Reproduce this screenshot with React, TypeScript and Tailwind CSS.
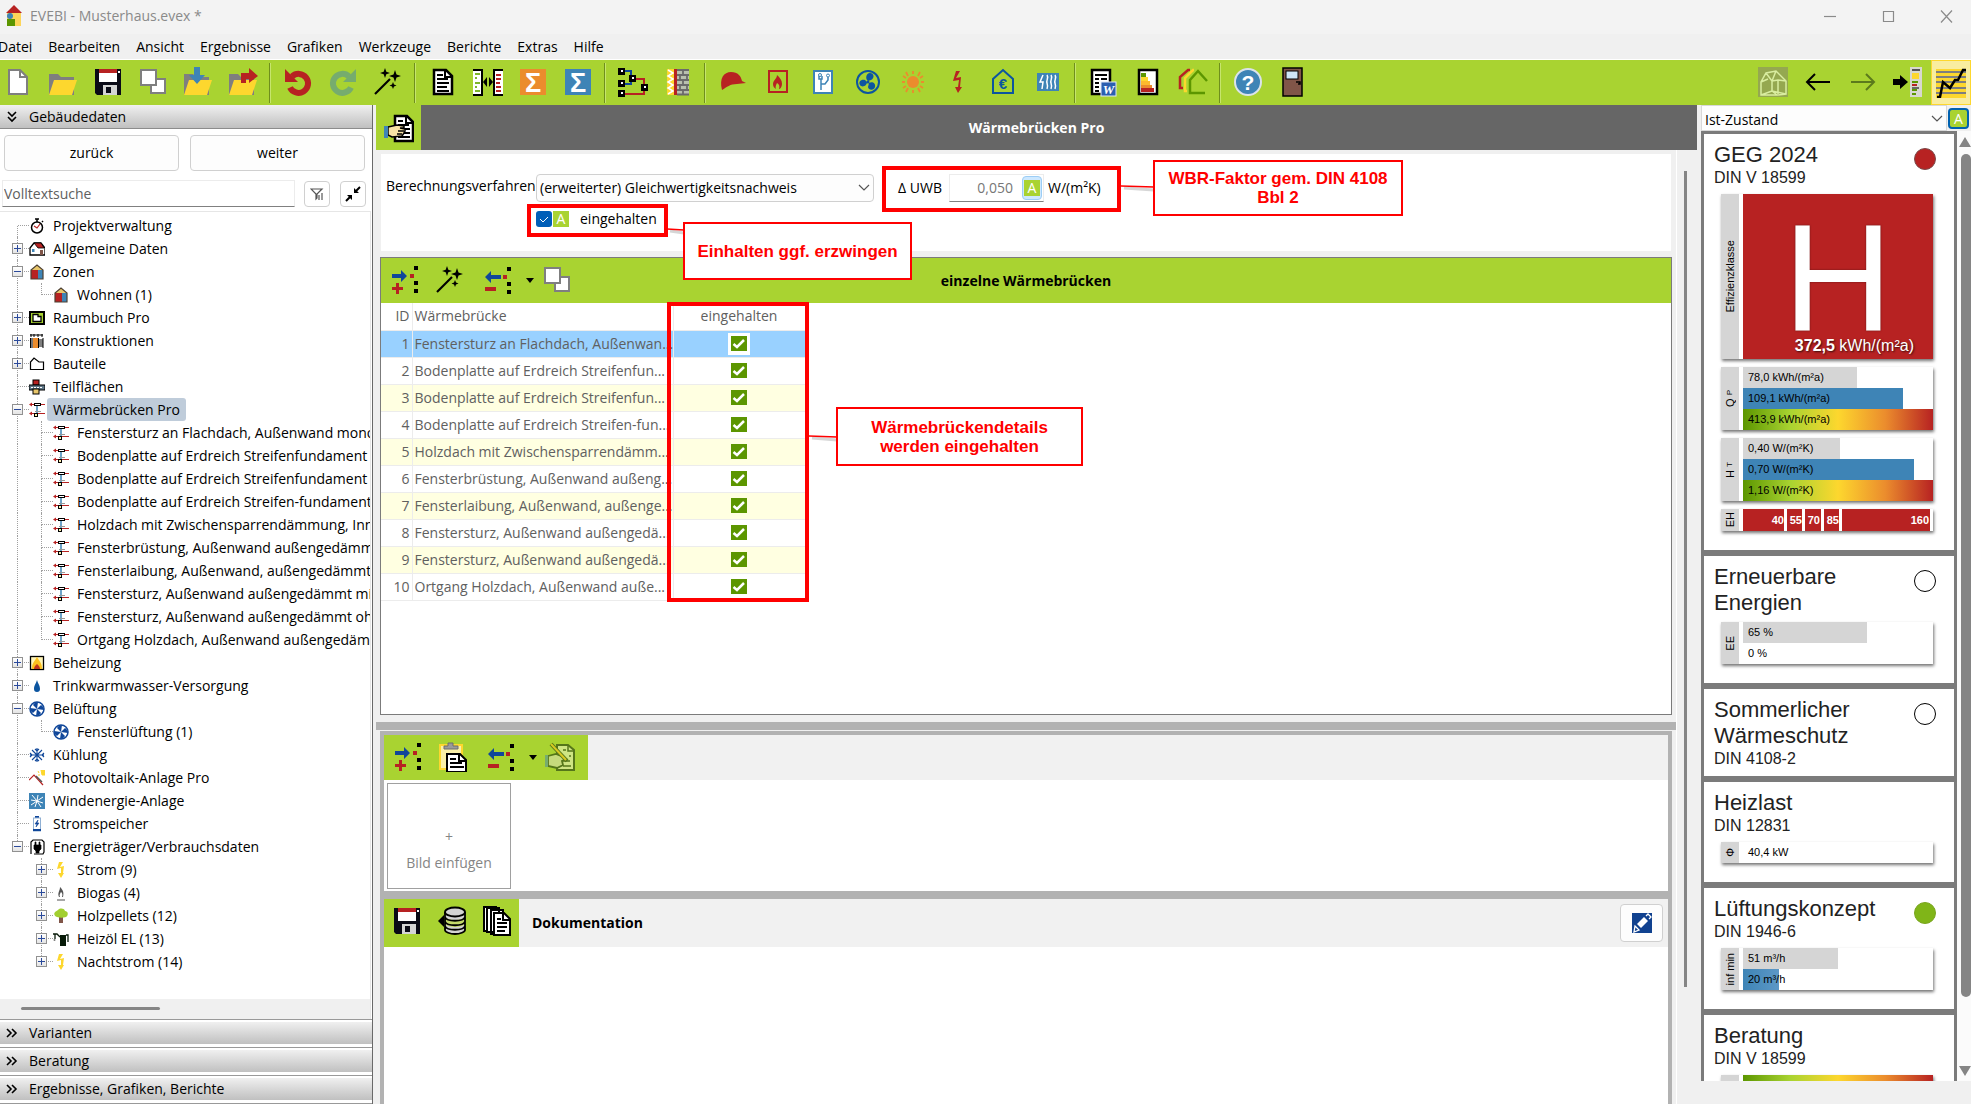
import React from "react";

type Kids = { children?: React.ReactNode };

const Ico = ({ s = 30, children }: Kids & { s?: number }) => (
  <svg width={s} height={s} viewBox={`0 0 ${s} ${s}`} fill="none" aria-hidden="true" className="block shrink-0">
    {children}
  </svg>
);

/* ---------- toolbar icons, 30 x 30 ---------- */

const Floppy = () => (
  <Ico>
    <path d="M2 2h26v26H4l-2-2z" fill="#0a0a16" />
    <rect x="6" y="2" width="18" height="4" fill="#b72222" />
    <rect x="6" y="6" width="18" height="9" fill="#fff" />
    <rect x="25" y="4" width="2" height="2" fill="#fff" />
    <rect x="10" y="18" width="14" height="10" fill="#d4d4d4" />
    <rect x="13" y="20" width="5" height="6" fill="#0a0a16" />
  </Ico>
);
const NewDoc = () => (
  <Ico>
    <path d="M6 3h11l7 7v17H6z" fill="#fff" stroke="#7f7f7f" strokeWidth="2" />
    <path d="M17 3v7h7" stroke="#7f7f7f" strokeWidth="2" />
  </Ico>
);
const FolderShape = () => (
  <>
    <path d="M1 7h9l3 3h13v18H1z" fill="#7f7f7f" />
    <path d="M6 13h23l-5 15H1z" fill="#fdd72e" />
  </>
);
const Folder = () => (
  <Ico>
    <FolderShape />
  </Ico>
);
const ImportI = () => (
  <Ico>
    <FolderShape />
    <path d="M11 0h6v8h5l-8 9-8-9h5z" fill="#3e84b6" />
  </Ico>
);
const ExportI = () => (
  <Ico>
    <FolderShape />
    <path d="M13 16V6h8V1l9 8-9 7v-4h-3v4z" fill="#b72222" />
  </Ico>
);
const Dup = () => (
  <Ico>
    <rect x="13" y="12" width="14" height="14" fill="#fff" stroke="#7f7f7f" strokeWidth="2" />
    <rect x="3" y="3" width="15" height="15" fill="#fff" stroke="#7f7f7f" strokeWidth="2" />
  </Ico>
);
const Undo = () => (
  <Ico>
    <path d="M9 9.500a9.500 9.500 0 1 1-2 11" stroke="#b72222" strokeWidth="6" />
    <path d="M2 2l0 13h13z" fill="#b72222" />
  </Ico>
);
const Redo = () => (
  <Ico>
    <path d="M21 9.500a9.500 9.500 0 1 0 2 11" stroke="#76ac6e" strokeWidth="6" />
    <path d="M28 2v13H15z" fill="#76ac6e" />
  </Ico>
);
const Wand = () => (
  <Ico>
    <path d="M2 27L17 12" stroke="#000" strokeWidth="2.200" />
    <path d="M12 1l1.300 3.700L17 6l-3.700 1.300L12 11l-1.300-3.700L7 6l3.700-1.300z" fill="#000" />
    <path d="M22 3l1.500 4.500L28 9l-4.500 1.500L22 15l-1.500-4.500L16 9l4.500-1.500z" fill="#000" />
    <path d="M20 15l1 2.500 2.500 1-2.500 1-1 2.500-1-2.500-2.500-1 2.500-1z" fill="#000" />
  </Ico>
);
const Doc = () => (
  <Ico>
    <path d="M6 3h12l6 6v18H6z" fill="#fff" stroke="#000" strokeWidth="2.500" />
    <path d="M17 3v7h7" stroke="#000" strokeWidth="2" />
    <path d="M9 8h6M9 12h11M9 16h12M9 20h10M9 24h12" stroke="#000" strokeWidth="2" />
  </Ico>
);
const Compare = () => (
  <Ico>
    <path d="M0 3h9v25H0z" fill="#fff" />
    <path d="M0 3h9v25H0" stroke="#000" strokeWidth="2" />
    <path d="M2 7h5M2 11h2M2 16h5M2 20h2M2 24h5" stroke="#7db52b" strokeWidth="2" />
    <path d="M21 3h9v25h-9z" fill="#fff" />
    <path d="M30 3h-9v25h9" stroke="#000" strokeWidth="2" />
    <path d="M23 8h5M23 12h5M23 16h4M23 20h5M23 24h5" stroke="#b72222" strokeWidth="2" />
    <path d="M14 10v10l-4-5zM16 10v10l4-5z" fill="#000" />
  </Ico>
);
const Sigma = ({ c }: { c: string }) => (
  <Ico>
    <rect x="2" y="2" width="26" height="26" fill={c} />
    <text x="15" y="24.500" fontSize="27" fontWeight="700" fill="#fff" textAnchor="middle" fontFamily="Liberation Sans, sans-serif">
      Σ
    </text>
  </Ico>
);
const Net = () => (
  <Ico>
    <path d="M4 4h9v6M4 17h9v-5" stroke="#10479a" strokeWidth="2" />
    <path d="M16 12h10v8M6 27h20v-6" stroke="#b72222" strokeWidth="2" />
    {[[0, 1], [0, 13], [0, 23], [11, 8], [23, 17]].map(([x, y]) => (
      <g key={`${x}-${y}`}>
        <rect x={x} y={y} width="7" height="7" fill="#000" />
        <rect x={x + 3} y={y + 2} width="2" height="2" fill="#fff" />
      </g>
    ))}
  </Ico>
);
const Wall = () => (
  <Ico>
    <rect x="4" y="2" width="8" height="26" fill="#fdd72e" />
    <path d="M5 3l5 3-5 3 5 3-5 3 5 3-5 3 5 3-5 3" stroke="#fff" strokeWidth="1.500" />
    <rect x="11" y="2" width="3" height="26" fill="#b72222" />
    <rect x="14" y="2" width="12" height="26" fill="#b9bfae" />
    <path d="M14 3h12M14 8h12M14 13h12M14 18h12M14 23h12M14 27.500h12" stroke="#6b6b6b" strokeWidth="1.800" />
    <path d="M20 3v5M17 8v5M24 8v5M20 13v5M17 18v5M24 18v5M20 23v5" stroke="#6b6b6b" strokeWidth="1.800" />
  </Ico>
);
const Cap = () => (
  <Ico>
    <path d="M4 23C1 11 6 5 13 5c7 0 10 4 11 9l4 2-9 1c-7 0-10 3-15 6z" fill="#b72222" />
  </Ico>
);
const FlameBox = () => (
  <Ico>
    <rect x="6" y="4" width="18" height="21" stroke="#b72222" strokeWidth="2" />
    <path d="M14 8c3 3 5 5 5 9 0 3-2 5-3 5 1-3 0-5-2-6-1 2-2 4-1 6-2-1-3-3-3-5 0-4 4-5 4-9z" fill="#b72222" />
  </Ico>
);
const PipeBox = () => (
  <Ico>
    <rect x="6" y="4" width="18" height="22" fill="#fff" stroke="#3e84b6" strokeWidth="2" />
    <path d="M13 23V12M13 17h4l3-4v-3M11 9v3h3V9" stroke="#3e84b6" strokeWidth="1.500" />
    <circle cx="20" cy="8.500" r="1.500" stroke="#3e84b6" />
    <circle cx="12" cy="8" r="1.500" stroke="#3e84b6" />
  </Ico>
);
const FanRing = () => (
  <Ico>
    <circle cx="15" cy="15" r="11" stroke="#0c55a0" strokeWidth="2" />
    <path d="M15 14c-3-2-2-8 2-8s5 5 1 7zM14 15c0 4-5 6-7 3s1-6 5-5zM16 16c3-2 7 0 6 4s-7 3-7 0z" fill="#0c55a0" />
    <circle cx="15" cy="15" r="1.500" fill="#0c55a0" />
  </Ico>
);
const Sun = () => (
  <Ico>
    <circle cx="15" cy="15" r="6" fill="#eb8c2d" />
    <path d="M15 4v3M15 23v3M4 15h3M23 15h3M8 5l2 4M22 5l-2 4M8 25l2-4M22 25l-2-4M5 9l3 2M25 9l-3 2M5 21l3-2M25 21l-3-2" stroke="#eb8c2d" strokeWidth="1.800" />
  </Ico>
);
const BoltRed = () => (
  <Ico>
    <path d="M17 4h-4l-3 10 6-1-1 7h-3l3 6 4-6h-2l1-10-5 1z" fill="#b72222" />
  </Ico>
);
const HouseEuro = () => (
  <Ico>
    <path d="M5 26V12l10-9 10 9v14z" stroke="#0c55a0" strokeWidth="2" />
    <text x="15" y="22" fontSize="15" fontWeight="700" fill="#0c55a0" textAnchor="middle" fontFamily="Liberation Sans, sans-serif">
      €
    </text>
  </Ico>
);
const Heater = () => (
  <Ico>
    <rect x="4" y="6" width="22" height="18" fill="#3e84b6" />
    <path d="M10 8l-3 7h3l-1 7" stroke="#fff" strokeWidth="1.500" />
    <path d="M14 8c2 3-1 5 0 8s1 4 0 6M18 8c2 3-1 5 0 8s1 4 0 6M22 8c2 3-1 5 0 8s1 4 0 6" stroke="#fff" strokeWidth="1.500" />
  </Ico>
);
const WordDoc = () => (
  <Ico>
    <rect x="4" y="3" width="18" height="24" fill="#fff" stroke="#000" strokeWidth="2.500" />
    <path d="M7 8h12M7 12h4M13 12h6M7 16h4M7 20h4M7 24h4" stroke="#000" strokeWidth="2.200" />
    <rect x="13" y="15" width="15" height="14" fill="#2b5fb0" stroke="#dfe8f5" />
    <text x="20.500" y="27" fontSize="13" fontWeight="700" fontStyle="italic" fill="#fff" textAnchor="middle" fontFamily="Liberation Serif, serif">
      W
    </text>
  </Ico>
);
const LabelI = () => (
  <Ico>
    <rect x="6" y="3" width="18" height="24" fill="#fff" stroke="#000" strokeWidth="2.500" />
    <rect x="8" y="6" width="5" height="4" fill="#5c9600" />
    <rect x="8" y="10" width="7" height="4" fill="#fdd72e" />
    <rect x="8" y="14" width="9" height="4" fill="#fdb92e" />
    <rect x="8" y="18" width="11" height="4" fill="#eb8c2d" />
    <rect x="8" y="21" width="13" height="4" fill="#b72222" />
  </Ico>
);
const Houses = () => (
  <Ico>
    <path d="M5 21H2V10l8-7h2" stroke="#b72222" strokeWidth="2.500" />
    <path d="M9 24H7V11l8-8h1" stroke="#fdd72e" strokeWidth="2.500" />
    <path d="M27 26H12V13l8-9 9 10" stroke="#5c9600" strokeWidth="2.500" />
  </Ico>
);
const Help = () => (
  <Ico>
    <circle cx="15" cy="15" r="13" fill="#3e84b6" stroke="#dbe3ea" strokeWidth="2" />
    <text x="15" y="22.500" fontSize="21" fontWeight="700" fill="#fff" textAnchor="middle" fontFamily="Liberation Sans, sans-serif">
      ?
    </text>
  </Ico>
);
const Door = () => (
  <Ico>
    <rect x="5" y="1" width="19" height="28" fill="#805548" stroke="#000" strokeWidth="1.500" />
    <rect x="8" y="4" width="12" height="8" fill="#cfe6f7" stroke="#000" />
    <path d="M18 15h4v2h-2" stroke="#000" strokeWidth="1.500" />
  </Ico>
);
const House3d = () => (
  <Ico>
    <rect width="30" height="30" fill="#95a850" />
    <path d="M3 28V15l5-9 10-2 10 10v13l-9 1zM8 6l6 8v10l5 4M3 15l7-3M14 14L18 4M14 14l6-1 8 1M20 13v14M14 24l-11 4M14 24l14 3" stroke="#d9eda0" strokeWidth="1.500" />
  </Ico>
);
const ArrowL = () => (
  <Ico>
    <path d="M27 15H4M12 7l-8 8 8 8" stroke="#000" strokeWidth="2" />
  </Ico>
);
const ArrowR = () => (
  <Ico>
    <path d="M3 15h23M18 7l8 8-8 8" stroke="#5b7a1c" strokeWidth="2" />
  </Ico>
);
const PanelI = () => (
  <Ico>
    <path d="M0 12h7V8l8 7-8 7v-4H0z" fill="#000" />
    <rect x="17" y="0" width="12" height="30" fill="#d8d8d0" />
    <rect x="19" y="2" width="8" height="2" fill="#555" />
    <rect x="19" y="6" width="7" height="6" fill="#fdd72e" />
    <path d="M19 15h6M19 23h5M19 27h4" stroke="#5c9600" strokeWidth="2" />
    <path d="M19 18h5" stroke="#b72222" strokeWidth="2" />
    <path d="M19 21h7" stroke="#444" strokeWidth="1.500" />
  </Ico>
);
const ChartI = () => (
  <Ico>
    <rect y="1" width="30" height="29" fill="#fdd72e" />
    <path d="M0 4h30M0 9h30M0 14h30M0 20h30M0 25h30" stroke="#7f7f7f" strokeWidth="2" />
    <path d="M1 29h3l3-15 7 6 5-8h3l5-10h3" stroke="#000" strokeWidth="2.500" />
  </Ico>
);
const RowAdd = () => (
  <Ico>
    <path d="M2 9h9V5l6 6-6 6v-4H2z" fill="#10479a" />
    <path d="M2 22h4v-4h3v4h4v3H9v4H6v-4H2z" fill="#b72222" />
    <rect x="20" y="9" width="4" height="4" fill="#b72222" />
    <path d="M24 1h4v4h-4zM24 16h4v4h-4zM24 24h4v4h-4z" fill="#000" />
  </Ico>
);
const RowDel = () => (
  <Ico>
    <path d="M18 9H8V5l-6 6 6 6v-4h10z" fill="#10479a" />
    <rect x="2" y="21" width="11" height="4" fill="#b72222" />
    <rect x="20" y="9" width="4" height="4" fill="#b72222" />
    <path d="M24 1h4v4h-4zM24 16h4v4h-4zM24 24h4v4h-4z" fill="#000" />
  </Ico>
);
const Clip = () => (
  <Ico>
    <rect x="2" y="3" width="22" height="24" fill="#faf0a8" stroke="#fdd72e" strokeWidth="2" />
    <path d="M6 7V4h4V1h5v3h5v3z" fill="#9a9a9a" stroke="#6d6d6d" />
    <path d="M9 12h13l6 6v12H9z" fill="#fff" stroke="#000" strokeWidth="2" />
    <path d="M21 12v7h7M12 17h6M12 21h12M12 25h14" stroke="#000" strokeWidth="2" />
  </Ico>
);
const HandDoc = () => (
  <Ico>
    <path d="M11 3h12l6 6v19H11z" fill="#fff" stroke="#000" strokeWidth="2.500" />
    <path d="M22 3v7h7M14 8h5M14 12h11M17 16h9M18 20h8M14 24h12" stroke="#000" strokeWidth="2" />
    <path d="M4 14l9-2 7 1v2h-4l5 1v2l-1 2-2 3-10 1-4-2z" fill="#f7e3a6" stroke="#000" strokeWidth="1.500" />
    <path d="M0 13h4v12H0z" fill="#3e84b6" />
    <path d="M14 18h6M13 21h5" stroke="#000" strokeWidth="1.500" />
  </Ico>
);
const EditDoc = () => (
  <Ico>
    <path d="M12 3h11l6 5v20H12z" fill="#cfe583" stroke="#55761a" strokeWidth="2" />
    <path d="M23 3v6h6M24 14h2M17 19h8M18 24h8M18 8h3" stroke="#55761a" strokeWidth="1.500" />
    <path d="M3 14l8-2 5 2 5 3-4 2 1 4-6 3-9-2z" fill="#c6da7c" stroke="#55761a" strokeWidth="1.800" />
    <path d="M0 13h3v12H0z" fill="#76ac6e" />
    <path d="M6 2l16 17" stroke="#55761a" strokeWidth="4" />
    <path d="M6 2l15 16" stroke="#d8c822" strokeWidth="2" />
  </Ico>
);
const Database = () => (
  <Ico>
    <path d="M1 15l6-6v12z" fill="#000" />
    <path d="M8 6v18c0 2 5 4 10 4s10-2 10-4V6z" fill="#d4d4d4" />
    <path d="M8 11c3 4 17 4 20 0v7c-3 4-17 4-20 0z" fill="#c3d96a" />
    <ellipse cx="18" cy="6" rx="10" ry="4.500" fill="#d4d4d4" stroke="#000" strokeWidth="1.800" />
    <path d="M8 6v18c0 2 5 4 10 4s10-2 10-4V6M8 11c2 5 18 5 20 0M8 15.500c2 5 18 5 20 0M8 20c2 5 18 5 20 0" stroke="#000" strokeWidth="1.800" />
  </Ico>
);
const DocStack = () => (
  <Ico>
    <path d="M2 1h12v24H2z" fill="#fff" stroke="#000" strokeWidth="2" />
    <path d="M5 2h12v24H5zM9 4h12v24H9z" fill="#fff" stroke="#000" strokeWidth="2" />
    <path d="M12 7h10l6 6v16H12z" fill="#fff" stroke="#000" strokeWidth="2" />
    <path d="M21 7v7h7M15 13h4M15 17h10M15 21h10M15 25h8" stroke="#000" strokeWidth="2" />
  </Ico>
);

/* ---------- tree icons, 16 x 16 ---------- */

const Stopwatch = () => (
  <Ico s={16}>
    <circle cx="8" cy="9.500" r="5.500" fill="#fff" stroke="#000" strokeWidth="1.500" />
    <path d="M6 1h4M8 1v3M13 3l1 1" stroke="#000" strokeWidth="1.500" />
    <path d="M5 8l3 2 3-4" stroke="#b72222" strokeWidth="1.200" />
  </Ico>
);
const HouseSm = () => (
  <Ico s={16}>
    <path d="M1 14V7l4-5h7l4 5v7z" fill="#fff" stroke="#000" strokeWidth="1.300" />
    <path d="M5 2h7l3 5H9z" fill="#b72222" stroke="#000" strokeWidth=".8" />
    <rect x="3" y="8" width="2.500" height="3" fill="#3e84b6" />
    <rect x="11" y="9" width="3" height="5" fill="#805548" />
  </Ico>
);
const ZoneI = () => (
  <Ico s={16}>
    <path d="M2 6l6-5 6 5z" fill="#e8c66a" />
    <rect x="2" y="6" width="7" height="9" fill="#b72222" />
    <rect x="9" y="6" width="5" height="9" fill="#3e84b6" />
    <path d="M2 15V6l6-5 6 5v9z" stroke="#4d4033" strokeWidth="1.200" />
  </Ico>
);
const RoomI = () => (
  <Ico s={16}>
    <rect x="1" y="2" width="14" height="12" fill="#a9d331" stroke="#000" strokeWidth="2" />
    <path d="M4 4.500h5v2h3v5H4z" fill="#fff" stroke="#000" strokeWidth="1.300" />
  </Ico>
);
const LayersI = () => (
  <Ico s={16}>
    <path d="M1 2h13M2 1v3M5 1v3M9 1v3M13 1v3" stroke="#000" />
    <rect x="2" y="5" width="2" height="10" fill="#777" />
    <rect x="4" y="5" width="5" height="10" fill="#eb8c2d" />
    <rect x="9" y="5" width="5" height="10" fill="#fff" />
    <path d="M1.500 5v10M9.500 5v10M14 5v10M10 7h4M10 9h4M10 11h4M10 13h4" stroke="#000" />
  </Ico>
);
const PartI = () => (
  <Ico s={16}>
    <path d="M1.500 13.500V6L5 2l5 4h4.500v7.500z" fill="#fff" stroke="#000" strokeWidth="1.200" />
  </Ico>
);
const CrossI = () => (
  <Ico s={16}>
    <rect x="4" y="1" width="6" height="5" fill="#b72222" stroke="#000" />
    <rect x="0" y="6" width="16" height="5" fill="#5e7686" stroke="#000" />
    <rect x="4" y="10" width="6" height="5" fill="#e8c66a" stroke="#000" />
    <path d="M2 8.500h12" stroke="#fff" strokeDasharray="2 1" />
  </Ico>
);
const BridgeI = () => (
  <Ico s={16}>
    <path d="M8 4v8" stroke="#3e84b6" strokeWidth="1.500" />
    <path d="M1 2.500h15M1 11.500h15" stroke="#b72222" />
    <path d="M0 2.500l3-2v4zM0 11.500l3-2v4z" fill="#b72222" />
    <rect x="5.500" y="1.500" width="6" height="2" fill="#fff" stroke="#000" />
    <rect x="5.500" y="11.500" width="3" height="3" fill="#fdf0b0" stroke="#000" />
    <path d="M6 9.500h6" stroke="#999" />
  </Ico>
);
const HeatI = () => (
  <Ico s={16}>
    <rect x="1.500" y="1.500" width="13" height="13" fill="#fff5b8" stroke="#000" strokeWidth="1.300" />
    <path d="M8 2c3 5 5 6 5 12H3C3 8 5 7 8 2z" fill="#fdc01e" />
    <path d="M8 9c2 2 3 3 3 5H5c0-2 1-3 3-5z" fill="#c0351d" />
  </Ico>
);
const DropI = () => (
  <Ico s={16}>
    <path d="M8 2c1 4 3 5 3 9a3 3 0 0 1-6 0c0-4 2-5 3-9z" fill="#0c55a0" />
  </Ico>
);
const FanI = () => (
  <Ico s={16}>
    <circle cx="8" cy="8" r="7" fill="#fff" stroke="#10479a" strokeWidth="1.500" />
    <path d="M8 8L4 4c1-2 3-3 5-3zM8 8l4-4c2 1 3 3 3 5zM8 8l4 4c-1 2-3 3-5 3zM8 8l-4 4c-2-1-3-3-3-5z" fill="#10479a" />
  </Ico>
);
const SnowI = () => (
  <Ico s={16}>
    <path d="M8 1v14M1 8h14M3 3l10 10M13 3L3 13M6 2l2 2 2-2M6 14l2-2 2 2M1 6l2 2-2 2M15 6l-2 2 2 2" stroke="#10479a" strokeWidth="1.100" />
  </Ico>
);
const PvI = () => (
  <Ico s={16}>
    <path d="M0 10l5-5 9 10" stroke="#b72222" strokeWidth="1.200" />
    <path d="M7 6l6 6" stroke="#555" strokeWidth="1.500" />
    <path d="M12 0h4v5h-3zM9 1l1 2M9 5l2 0" fill="#fdd72e" stroke="#fdd72e" />
  </Ico>
);
const WindI = () => (
  <Ico s={16}>
    <rect x="0" y="0" width="16" height="16" fill="#3e84b6" />
    <path d="M8 8L3 2M8 8l6-4M8 8l4 6M8 8l-6 4M8 8l1-6M8 8l6 2M8 8l-2 6M8 8L2 7" stroke="#fff" />
  </Ico>
);
const BatteryI = () => (
  <Ico s={16}>
    <rect x="6" y="0" width="4" height="2" fill="#10479a" />
    <rect x="4.500" y="2" width="7" height="13" fill="#fff" stroke="#8fb0d4" />
    <path d="M9 4L6 8h2l-1 3 3-4H8z" fill="#10479a" stroke="#10479a" strokeWidth=".6" />
    <rect x="4" y="13" width="8" height="2" fill="#10479a" />
  </Ico>
);
const PlugI = () => (
  <Ico s={16}>
    <path d="M2 15V3l2-2h9l2 2v10l-1 2H5" fill="#fff" stroke="#000" strokeWidth="1.200" />
    <path d="M6 3v3H5v4l2 2v2h3v-2l2-2V6h-1V3h-1v3H7V3z" fill="#000" stroke="#000" strokeWidth=".7" />
  </Ico>
);
const BoltI = () => (
  <Ico s={16}>
    <path d="M10 0H6L4 7l4-1v5H5l3 5 3-5h-1l1-7-4 1z" fill="#fdd72e" />
  </Ico>
);
const GasI = () => (
  <Ico s={16}>
    <path d="M7 2c3 3 4 5 3 10H9c1-3 0-4-1-5-1 2-2 3-1 5H6C4 8 7 6 7 2z" fill="#555" />
    <path d="M4 15h8" stroke="#777" strokeWidth="1.300" />
  </Ico>
);
const TreeI = () => (
  <Ico s={16}>
    <path d="M6 9h4v6H6z" fill="#805548" />
    <path d="M4 9a3 3 0 0 1-2-5c1-1 2-1 3-2 2-2 6-2 7 1 3 0 4 4 1 6-3 1-6 1-9 0z" fill="#a2cf30" />
  </Ico>
);
const PumpI = () => (
  <Ico s={16}>
    <path d="M7 4h6v11H7z" fill="#071a08" />
    <path d="M13 4h2v7M7 6L4 3H0M2 3v5" stroke="#071a08" strokeWidth="1.300" />
    <circle cx="1.500" cy="9" r="1" fill="#777" />
  </Ico>
);

const Chevron = ({ className }: { className: string }) => (
  <svg width="12" height="8" viewBox="0 0 12 8" fill="none" aria-hidden="true" className={className}>
    <path d="M1 1l5 5 5-5" stroke="#555" strokeWidth="1.200" />
  </svg>
);
const Caret = () => (
  <svg width="8" height="5" viewBox="0 0 8 5" aria-hidden="true">
    <path d="M0 0h8L4 5z" fill="#000" />
  </svg>
);
const DoubleChevron = ({ down = false }: { down?: boolean }) => (
  <svg width="12" height="12" viewBox="0 0 12 12" fill="none" aria-hidden="true" className={down ? "rotate-90" : ""}>
    <path d="M1 2l4 4-4 4M6 2l4 4-4 4" stroke="#000" strokeWidth="1.600" />
  </svg>
);

/* ---------- top bars ---------- */

const TB = ({ label, children }: Kids & { label: string }) => (
  <button aria-label={label} className="flex h-[45px] w-[45px] shrink-0 items-center justify-center pb-px">
    {children}
  </button>
);
const Sep = () => <span className="mx-1 h-10 w-[2px] shrink-0 border-r border-[#c6e56d] bg-[#6f8f1c]" />;

const menu = ["Datei", "Bearbeiten", "Ansicht", "Ergebnisse", "Grafiken", "Werkzeuge", "Berichte", "Extras", "Hilfe"];

function TopBars() {
  return (
    <header className="shrink-0">
      <div className="flex h-[34px] items-center bg-[#f3f3f3] pb-[2px] pl-[5px] text-[#8a8a8a]">
        <svg width="18" height="22" viewBox="0 0 18 22" aria-hidden="true">
          <rect x="2" y="8" width="14" height="13" fill="#fdd55a" />
          <path d="M9 0l8 8H1z" fill="#b72222" />
          <circle cx="5" cy="11" r="3" fill="#3e84b6" />
          <rect x="2" y="14" width="8" height="7" fill="#5c9600" />
        </svg>
        <h1 className="ml-[7px] flex-1">EVEBI - Musterhaus.evex *</h1>
        <div className="-mr-1 flex">
          {["M1 7.500h12", "M2.500 2.500h10v10h-10z", "M2 1.500l11 12M13 1.500l-11 12"].map((d, i) => (
            <button key={d} aria-label={["Minimieren", "Maximieren", "Schließen"][i]} className="flex h-7 w-[58px] items-center justify-center">
              <svg width="15" height="15" viewBox="0 0 15 15" fill="none" aria-hidden="true">
                <path d={d} stroke="#8a8a8a" strokeWidth="1.200" />
              </svg>
            </button>
          ))}
        </div>
      </div>
      <nav className="-ml-[2px] flex h-[26px] items-center gap-4 border-b border-white">
        {menu.map((m) => (
          <button key={m}>{m}</button>
        ))}
      </nav>
      <div className="flex h-[45px] items-center bg-[#a9d331]">
        <div className="-ml-[5px] flex flex-1 items-center">
          <TB label="Neu"><NewDoc /></TB>
          <TB label="Öffnen"><Folder /></TB>
          <TB label="Speichern"><Floppy /></TB>
          <TB label="Duplizieren"><Dup /></TB>
          <TB label="Importieren"><ImportI /></TB>
          <TB label="Exportieren"><ExportI /></TB>
          <Sep />
          <TB label="Rückgängig"><Undo /></TB>
          <TB label="Wiederholen"><Redo /></TB>
          <TB label="Assistent"><Wand /></TB>
          <Sep />
          <TB label="Dokument"><Doc /></TB>
          <TB label="Vergleich"><Compare /></TB>
          <TB label="Summe Ist"><Sigma c="#eb8c2d" /></TB>
          <TB label="Summe Soll"><Sigma c="#3e84b6" /></TB>
          <Sep />
          <TB label="Struktur"><Net /></TB>
          <TB label="Wandaufbau"><Wall /></TB>
          <Sep />
          <TB label="Beratung"><Cap /></TB>
          <TB label="Heizung"><FlameBox /></TB>
          <TB label="Rohrnetz"><PipeBox /></TB>
          <TB label="Lüftung"><FanRing /></TB>
          <TB label="Sonne"><Sun /></TB>
          <TB label="Strom"><BoltRed /></TB>
          <TB label="Kosten"><HouseEuro /></TB>
          <TB label="Heizlast"><Heater /></TB>
          <Sep />
          <TB label="Word-Bericht"><WordDoc /></TB>
          <TB label="Energieausweis"><LabelI /></TB>
          <TB label="Sanierungsfahrplan"><Houses /></TB>
          <Sep />
          <TB label="Hilfe"><Help /></TB>
          <TB label="Beenden"><Door /></TB>
        </div>
        <TB label="3D-Ansicht"><House3d /></TB>
        <TB label="Zurück"><ArrowL /></TB>
        <TB label="Vor"><ArrowR /></TB>
        <TB label="Leiste einblenden"><PanelI /></TB>
        <button aria-label="Diagramm" className="ml-px flex h-full w-[40px] items-center justify-center border border-[#fdd72e] bg-[#f9eda0]">
          <ChartI />
        </button>
      </div>
    </header>
  );
}

/* ---------- left panel ---------- */

type Node = { t: string; i: React.ReactNode; child?: boolean; ex?: "+" | "-"; first?: boolean; last?: boolean; end?: boolean; sel?: boolean };

const bridges = [
  "Fenstersturz an Flachdach, Außenwand monolithisch",
  "Bodenplatte auf Erdreich Streifenfundament",
  "Bodenplatte auf Erdreich Streifenfundament",
  "Bodenplatte auf Erdreich Streifen-fundament",
  "Holzdach mit Zwischensparrendämmung, Innenwand",
  "Fensterbrüstung, Außenwand außengedämmt",
  "Fensterlaibung, Außenwand, außengedämmt",
  "Fenstersturz, Außenwand außengedämmt mit",
  "Fenstersturz, Außenwand außengedämmt ohne",
  "Ortgang Holzdach, Außenwand außengedämmt",
];

const nodes: Node[] = [
  { t: "Projektverwaltung", i: <Stopwatch />, first: true },
  { t: "Allgemeine Daten", i: <HouseSm />, ex: "+" },
  { t: "Zonen", i: <ZoneI />, ex: "-" },
  { t: "Wohnen (1)", i: <ZoneI />, child: true, last: true },
  { t: "Raumbuch Pro", i: <RoomI />, ex: "+" },
  { t: "Konstruktionen", i: <LayersI />, ex: "+" },
  { t: "Bauteile", i: <PartI />, ex: "+" },
  { t: "Teilflächen", i: <CrossI /> },
  { t: "Wärmebrücken Pro", i: <BridgeI />, ex: "-", sel: true },
  ...bridges.map((t, n) => ({ t, i: <BridgeI />, child: true, last: n === 9 })),
  { t: "Beheizung", i: <HeatI />, ex: "+" },
  { t: "Trinkwarmwasser-Versorgung", i: <DropI />, ex: "+" },
  { t: "Belüftung", i: <FanI />, ex: "-" },
  { t: "Fensterlüftung (1)", i: <FanI />, child: true, last: true },
  { t: "Kühlung", i: <SnowI /> },
  { t: "Photovoltaik-Anlage Pro", i: <PvI /> },
  { t: "Windenergie-Anlage", i: <WindI /> },
  { t: "Stromspeicher", i: <BatteryI /> },
  { t: "Energieträger/Verbrauchsdaten", i: <PlugI />, ex: "-", last: true },
  { t: "Strom (9)", i: <BoltI />, child: true, ex: "+", end: true },
  { t: "Biogas (4)", i: <GasI />, child: true, ex: "+", end: true },
  { t: "Holzpellets (12)", i: <TreeI />, child: true, ex: "+", end: true },
  { t: "Heizöl EL (13)", i: <PumpI />, child: true, ex: "+", end: true },
  { t: "Nachtstrom (14)", i: <BoltI />, child: true, ex: "+", end: true, last: true },
];

const dots = "border-dotted border-[#a0a0a0]";

const TreeRow = ({ n }: { n: Node }) => (
  <li className="flex h-[23px] items-center pl-3">
    {n.child && (
      <span className="flex h-full w-6 shrink-0 pl-[5px]">{!n.end && <span className={`h-full border-l ${dots}`} />}</span>
    )}
    <span className="relative flex h-full w-[17px] shrink-0 items-center">
      {!n.first && <span className={`absolute left-[5px] top-0 h-1/2 border-l ${dots}`} />}
      {!n.last && <span className={`absolute bottom-0 left-[5px] h-1/2 border-l ${dots}`} />}
      <span className={`absolute left-[6px] top-[11px] w-[11px] border-t ${dots}`} />
      {n.ex && (
        <button
          aria-label={n.ex === "+" ? `${n.t} öffnen` : `${n.t} schließen`}
          className="relative flex size-[11px] items-center justify-center border border-[#919191] bg-linear-to-b from-white to-[#e4e4e4]"
        >
          <svg width="7" height="7" viewBox="0 0 7 7" aria-hidden="true">
            <path d={n.ex === "+" ? "M0 3.500h7M3.500 0v7" : "M0 3.500h7"} stroke="#2b4a9b" />
          </svg>
        </button>
      )}
    </span>
    {n.i}
    <button className={`ml-[2px] h-[23px] rounded-[3px] px-[6px] whitespace-nowrap ${n.sel ? "bg-[#bfccda]" : ""}`}>{n.t}</button>
  </li>
);

const bar = "flex w-full items-center bg-linear-to-b from-[#f0f0f0] to-[#c0c0c0] pl-[6px] text-left";

function LeftPanel() {
  return (
    <aside className="flex w-[373px] shrink-0 flex-col border-r border-[#696969] bg-white">
      <button className={`${bar} h-6 shrink-0 gap-[11px] border-b border-[#8c8c8c]`}>
        <DoubleChevron down />
        Gebäudedaten
      </button>
      <div className="flex gap-[11px] px-1 pt-[6px] pr-[7px]">
        <button className="h-9 flex-1 rounded border border-[#d0d0d0] bg-[#fdfdfd]">zurück</button>
        <button className="h-9 flex-1 rounded border border-[#d0d0d0] bg-[#fdfdfd]">weiter</button>
      </div>
      <div className="flex items-center pt-[9px] pr-[6px] pl-[2px]">
        <input
          aria-label="Volltextsuche"
          placeholder="Volltextsuche"
          className="h-[27px] w-0 flex-1 border border-[#ececec] border-b-[#808080] px-px outline-none placeholder:text-[#606060]"
        />
        <button aria-label="Filter" className="ml-[9px] flex size-[26px] items-center justify-center rounded border border-[#d0d0d0]">
          <svg width="14" height="14" viewBox="0 0 14 14" fill="none" aria-hidden="true">
            <path d="M1 2h11L7 7v4l-1 1V7z" stroke="#555" strokeWidth="1.200" />
            <path d="M8 8h2v5H8zM11 6h2v7h-2z" fill="#999" />
          </svg>
        </button>
        <button aria-label="Alle einklappen" className="ml-[10px] flex size-[26px] items-center justify-center rounded border border-[#d0d0d0]">
          <svg width="16" height="16" viewBox="0 0 16 16" aria-hidden="true">
            <path d="M15 1l-4 4M1 15l4-4" stroke="#000" strokeWidth="2" />
            <path d="M9 2v5h5zM7 14V9H2z" fill="#000" />
          </svg>
        </button>
      </div>
      <div className="mt-1 mr-px flex min-h-0 flex-1 flex-col border-t border-r border-[#e6e6e6]">
        <ul className="min-h-0 flex-1 overflow-hidden pt-[2px]">
          {nodes.map((n, k) => (
            <TreeRow key={k} n={n} />
          ))}
        </ul>
        <div className="h-5 shrink-0 bg-[#f0f0f0] pt-2 pl-[21px]">
          <div className="h-[3px] w-[139px] rounded-full bg-[#858585]" />
        </div>
      </div>
      {["Varianten", "Beratung", "Ergebnisse, Grafiken, Berichte"].map((t) => (
        <div key={t} className="h-7 shrink-0 border-t border-[#999] pt-[2px]">
          <button className={`${bar} h-[22px] gap-[11px]`}>
            <DoubleChevron />
            {t}
          </button>
        </div>
      ))}
      <div className="h-px shrink-0 bg-[#999]" />
    </aside>
  );
}

/* ---------- main area ---------- */

const rows = [
  "Fenstersturz an Flachdach, Außenwan...",
  "Bodenplatte auf Erdreich Streifenfun...",
  "Bodenplatte auf Erdreich Streifenfun...",
  "Bodenplatte auf Erdreich Streifen-fun...",
  "Holzdach mit Zwischensparrendämm...",
  "Fensterbrüstung, Außenwand außeng...",
  "Fensterlaibung, Außenwand, außenge...",
  "Fenstersturz, Außenwand außengedä...",
  "Fenstersturz, Außenwand außengedä...",
  "Ortgang Holzdach, Außenwand auße...",
];

const note = "absolute flex items-center justify-center border-2 border-[#ff0000] bg-white text-center text-[17px] leading-[19px] font-bold text-[#ff0000] font-['Liberation_Sans',sans-serif]";
const frame = "pointer-events-none absolute border-4 border-[#ff0000]";

const Connector = ({ w, className }: { w: number; className: string }) => (
  <svg width={w} height="14" fill="none" aria-hidden="true" className={`absolute ${className}`}>
    <path d={`M3 5L${w} 7`} stroke="#bbb" strokeWidth="3" opacity=".6" />
    <path d={`M0 3L${w} 4`} stroke="#ff0000" strokeWidth="1.500" />
  </svg>
);

function MainArea() {
  return (
    <main className="relative flex min-w-0 flex-1 flex-col pl-[3px]">
      <div className="flex h-[45px] shrink-0 bg-[#666]">
        <button aria-label="Bearbeiten" className="flex w-[45px] items-center justify-center bg-[#a9d331]">
          <HandDoc />
        </button>
        <h2 className="flex flex-1 items-center justify-center pr-[45px] font-bold text-white">Wärmebrücken Pro</h2>
      </div>
      <div className="flex min-h-0 flex-1">
        <div className="flex min-w-0 flex-1 flex-col pt-1">
          <section className="mx-[5px] h-[97px] shrink-0 bg-white pt-5 pl-[5px]">
            <div className="flex items-center">
              <label htmlFor="verfahren" className="-mt-1 w-[150px]">
                Berechnungsverfahren
              </label>
              <span className="relative">
                <select id="verfahren" className="h-7 w-[338px] appearance-none rounded-sm border border-[#d0d0d0] bg-[#fdfdfd] pl-[3px]">
                  <option>(erweiterter) Gleichwertigkeitsnachweis</option>
                </select>
                <Chevron className="pointer-events-none absolute top-[10px] right-1" />
              </span>
              <label htmlFor="uwb" className="ml-6 w-[51px]">
                Δ UWB
              </label>
              <span className="flex h-7 w-[95px] items-center border border-[#ececec] border-b-[#808080] pr-px">
                <input id="uwb" defaultValue="0,050" className="w-[64px] flex-1 pr-[9px] text-right text-[#777] outline-none" />
                <button aria-label="Automatik ΔUWB" className="flex h-6 w-5 items-center justify-center rounded-sm border border-[#9ccdf5] bg-[#cce8ff]">
                  <span className="flex h-4 w-4 items-center justify-center bg-[#a9d331] text-white">A</span>
                </button>
              </span>
              <span className="ml-1">W/(m²K)</span>
            </div>
            <div className="mt-[7px] flex items-center pl-[150px]">
              <span className="relative size-4">
                <input id="ok" type="checkbox" defaultChecked className="block size-4 appearance-none rounded-[3px] bg-[#005fb8]" />
                <svg width="16" height="16" viewBox="0 0 16 16" fill="none" aria-hidden="true" className="pointer-events-none absolute top-0 left-0">
                  <path d="M4 8l3 3 5-5" stroke="#fff" />
                </svg>
              </span>
              <button aria-label="Automatik eingehalten" className="ml-px flex size-4 items-center justify-center bg-[#a9d331] text-white">
                A
              </button>
              <label htmlFor="ok" className="ml-[11px]">
                eingehalten
              </label>
            </div>
          </section>

          <section className="mx-1 mt-[6px] h-[458px] shrink-0 border border-[#7b7b7b] bg-white">
            <div className="relative flex h-[45px] items-center bg-[#a9d331] pl-px">
              <TB label="Zeile hinzufügen"><RowAdd /></TB>
              <TB label="Assistent"><Wand /></TB>
              <button aria-label="Zeile löschen" className="ml-[3px] flex h-[45px] w-[45px] items-center justify-center"><RowDel /></button>
              <button aria-label="Löschoptionen" className="flex w-[14px] justify-end"><Caret /></button>
              <TB label="Duplizieren"><Dup /></TB>
              <h3 className="pointer-events-none absolute inset-0 flex items-center justify-center font-bold">einzelne Wärmebrücken</h3>
            </div>
            <table className="w-[424px] table-fixed border-collapse text-[#606060]">
              <colgroup>
                <col className="w-[31px]" />
                <col className="w-[261px]" />
                <col className="w-[132px]" />
              </colgroup>
              <thead>
                <tr className="h-[27px] border-b border-[#ececec]">
                  <th className="border-r border-[#ececec] pr-[2px] text-right font-normal">ID</th>
                  <th className="border-r border-[#ececec] pl-[2px] text-left font-normal">Wärmebrücke</th>
                  <th className="border-r border-[#ececec] font-normal">eingehalten</th>
                </tr>
              </thead>
              <tbody>
                {rows.map((r, k) => (
                  <tr key={k} className={`h-[27px] border-b border-[#ececec] ${k === 0 ? "bg-[#99d1ff]" : k % 2 === 0 ? "bg-[#ffffe1]" : "bg-white"}`}>
                    <td className="border-r border-[#ececec] pr-[2px] text-right">{k + 1}</td>
                    <td className="overflow-hidden border-r border-[#ececec] pl-[2px] whitespace-nowrap">{r}</td>
                    <td className="border-r border-[#ececec]">
                      <span className={`relative mx-auto flex h-[22px] w-[22px] items-center justify-center ${k === 0 ? "bg-white" : ""}`}>
                        <input type="checkbox" defaultChecked aria-label={`${r} eingehalten`} className="h-[15px] w-4 appearance-none bg-[#5c9600]" />
                        <svg width="16" height="15" viewBox="0 0 16 15" fill="none" aria-hidden="true" className="pointer-events-none absolute">
                          <path d="M2.500 8l3.500 3 7-7" stroke="#fff" strokeWidth="2.500" />
                        </svg>
                      </span>
                    </td>
                  </tr>
                ))}
              </tbody>
            </table>
          </section>

          <div className="mt-[7px] h-2 shrink-0 bg-[#b2b2b2]" />

          <section className="mx-1 mt-px flex min-h-0 flex-1 flex-col border-4 border-b-0 border-[#b2b2b2] bg-white">
            <div className="h-[45px] shrink-0 bg-[#f1f1f1]">
              <div className="flex h-full w-[204px] items-center bg-[#a9d331] pl-px">
                <TB label="Bild hinzufügen"><RowAdd /></TB>
                <TB label="Aus Zwischenablage einfügen"><Clip /></TB>
                <button aria-label="Bild löschen" className="ml-[3px] flex h-[45px] w-[45px] items-center justify-center"><RowDel /></button>
                <button aria-label="Löschoptionen" className="flex w-[14px] justify-end"><Caret /></button>
                <TB label="Bild bearbeiten"><EditDoc /></TB>
              </div>
            </div>
            <div className="h-[111px] shrink-0 pt-[3px] pl-[3px]">
              <button className="flex h-[106px] w-[124px] flex-col items-center border border-[#a0a0a0] pt-10 leading-[26px] text-[#858585]">
                <span>+</span>
                <span>Bild einfügen</span>
              </button>
            </div>
            <div className="h-2 shrink-0 bg-[#b2b2b2]" />
            <div className="flex h-12 shrink-0 items-center bg-[#f1f1f1] pr-[5px]">
              <div className="flex h-full w-[135px] items-center bg-[#a9d331] pb-1">
                <TB label="Speichern"><Floppy /></TB>
                <TB label="Aus Datenbank"><Database /></TB>
                <TB label="Dokumente"><DocStack /></TB>
              </div>
              <h3 className="ml-[13px] flex-1 font-bold">Dokumentation</h3>
              <button aria-label="Dokumentation bearbeiten" className="flex h-[38px] w-[43px] items-center justify-center rounded border border-[#d0d0d0] bg-[#fdfdfd]">
                <svg width="20" height="20" viewBox="0 0 20 20" fill="none" aria-hidden="true">
                  <rect width="20" height="20" fill="#10418f" />
                  <path d="M5 11l7-7 4 4-7 7z" fill="#fff" />
                  <path d="M3 13l4 4-5 2zM14 3l2-2 3 3-2 2" stroke="#fff" strokeWidth="1.300" />
                </svg>
              </button>
            </div>
          </section>
        </div>
        <div className="w-[21px] shrink-0 border-l border-white pt-[21px] pl-[7px]">
          <div className="h-[816px] w-[3px] bg-[#858585]" />
        </div>
      </div>

      <div className={`${frame} top-[99px] left-[154px] h-[33px] w-[141px]`} />
      <div className={`${frame} top-[61px] left-[509px] h-[46px] w-[239px]`} />
      <div className={`${frame} top-[197px] left-[294px] h-[300px] w-[142px]`} />
      <Connector w={17} className="top-[121px] left-[294px]" />
      <Connector w={33} className="top-[78px] left-[748px]" />
      <Connector w={28} className="top-[328px] left-[436px]" />
      <div className={`${note} top-[117px] left-[310px] h-[58px] w-[229px]`}>Einhalten ggf. erzwingen</div>
      <div className={`${note} top-[55px] left-[780px] h-[56px] w-[250px]`}>
        WBR-Faktor gem. DIN 4108
        <br />
        Bbl 2
      </div>
      <div className={`${note} top-[302px] left-[463px] h-[59px] w-[247px]`}>
        Wärmebrückendetails
        <br />
        werden eingehalten
      </div>
    </main>
  );
}

/* ---------- right panel ---------- */

const rainbow = "bg-linear-[90deg,#5c9600,#a9d331_25%,#fdd72e_50%,#eb8c2d_75%,#b72222]";

const Card = ({ title, sub, dot, children, className = "pb-[19px]" }: Kids & { title: string; sub?: string; dot?: string; className?: string }) => (
  <section className={`shrink-0 bg-white pt-2 ${className}`}>
    <div className="flex items-start justify-between pr-[18px] pl-[10px]">
      <div>
        <h3 className="text-[22px] leading-[26px]">{title}</h3>
        {sub && <p className="text-base leading-5">{sub}</p>}
      </div>
      {dot && <span className={`mt-[6px] size-[22px] shrink-0 rounded-full border ${dot}`} />}
    </div>
    {children && <div className="mt-[6px] mr-[21px] ml-[17px] flex flex-col gap-2">{children}</div>}
  </section>
);

const Block = ({ label, children }: Kids & { label: React.ReactNode }) => (
  <div className="flex bg-white text-[11px] text-black shadow-[1px_2px_3px_rgba(0,0,0,0.55)]">
    <div className="mr-1 flex w-[18px] shrink-0 items-center justify-center bg-[#d5d5d5]">
      <span className="rotate-180 leading-none whitespace-nowrap [writing-mode:vertical-rl]">{label}</span>
    </div>
    <div className="min-w-0 flex-1">{children}</div>
  </div>
);

const Bar = ({ w, c, children }: Kids & { w: number; c: string }) => (
  <div className="relative h-[21px]">
    <div className={`absolute inset-y-0 left-0 ${c}`} style={{ width: `${w}%` }} />
    <span className="relative block pl-[5px] leading-[21px]">{children}</span>
  </div>
);

const QP = (
  <>
    Q <span className="text-[8px]">P</span>
  </>
);

function RightPanel() {
  return (
    <aside className="mb-[23px] ml-1 flex w-[270px] shrink-0 flex-col">
      <div className="flex h-[26px] shrink-0 gap-px">
        <span className="relative flex-1">
          <select aria-label="Zustand" className="h-full w-full appearance-none border border-[#d8d8d8] bg-[#fdfdfd] pt-[3px] pl-[3px]">
            <option>Ist-Zustand</option>
          </select>
          <Chevron className="pointer-events-none absolute top-[10px] right-[4px]" />
        </span>
        <button aria-label="Automatik" className="mt-[3px] mr-[2px] flex size-[21px] items-center justify-center rounded border-2 border-[#0062b0] bg-[#a9d331] text-white">
          A
        </button>
      </div>
      <div className="flex min-h-0 flex-1">
        <div className="flex w-[256px] flex-col gap-[6px] overflow-hidden border-x-[3px] border-t-[3px] border-[#7b7b7b] bg-[#7b7b7b] font-['Liberation_Sans',sans-serif] text-[#222]">
          <Card title="GEG 2024" sub="DIN V 18599" dot="border-[#7a4a4a] bg-[#b72222]">
            <Block label="Effizienzklasse">
              <div className="flex h-[165px] flex-col bg-[#b72222] pt-[25px] text-white">
                <span className="text-center text-[152px] leading-[118px] [text-shadow:0_0_2px_rgba(0,0,0,0.5)]">H</span>
                <span className="pr-[19px] text-right text-base leading-[18px] [text-shadow:1px_1px_2px_rgba(0,0,0,0.7)]">
                  <b>372,5</b> kWh/(m²a)
                </span>
              </div>
            </Block>
            <Block label={QP}>
              <Bar w={60} c="bg-[#d5d5d5]">78,0 kWh/(m²a)</Bar>
              <Bar w={84} c="bg-[#3e84b6]">109,1 kWh/(m²a)</Bar>
              <Bar w={100} c={rainbow}>413,9 kWh/(m²a)</Bar>
            </Block>
            <Block label={<>H <span className="text-[8px]">T</span></>}>
              <Bar w={51} c="bg-[#d5d5d5]">0,40 W/(m²K)</Bar>
              <Bar w={90} c="bg-[#3e84b6]">0,70 W/(m²K)</Bar>
              <Bar w={100} c={rainbow}>1,16 W/(m²K)</Bar>
            </Block>
            <Block label="EH">
              <div className="flex h-[22px] gap-[3px] pr-[3px] text-right leading-[22px] font-bold text-white">
                <span className="w-[41px] bg-[#b72222]">40</span>
                <span className="w-[15px] bg-[#b72222]">55</span>
                <span className="w-4 bg-[#b72222] pr-px">70</span>
                <span className="w-[15px] bg-[#b72222]">85</span>
                <span className="flex-1 bg-[#b72222] pr-px">160</span>
              </div>
            </Block>
          </Card>
          <Card title="Erneuerbare Energien" dot="border-black bg-white">
            <Block label="EE">
              <Bar w={65} c="bg-[#d5d5d5]">65 %</Bar>
              <Bar w={0} c="bg-[#3e84b6]">0 %</Bar>
            </Block>
          </Card>
          <Card title="Sommerlicher Wärmeschutz" sub="DIN 4108-2" dot="border-black bg-white" className="pb-[7px]" />
          <Card title="Heizlast" sub="DIN 12831">
            <Block label="Φ">
              <Bar w={0} c="bg-[#3e84b6]">40,4 kW</Bar>
            </Block>
          </Card>
          <Card title="Lüftungskonzept" sub="DIN 1946-6" dot="border-[#7aa520] bg-[#80b518]">
            <Block label="inf min">
              <Bar w={50} c="bg-[#d5d5d5]">51 m³/h</Bar>
              <Bar w={19} c="bg-linear-to-r from-[#3e84b6] to-[#5c98c6]">20 m³/h</Bar>
            </Block>
          </Card>
          <Card title="Beratung" sub="DIN V 18599">
            <Block label="">
              <Bar w={100} c={rainbow} />
              <Bar w={60} c="bg-[#d5d5d5]" />
            </Block>
          </Card>
        </div>
        <div className="flex flex-1 flex-col items-end bg-[#fbfbfb] pt-[6px] pb-[5px]">
          <svg width="12" height="10" viewBox="0 0 12 10" aria-hidden="true">
            <path d="M6 0l6 10H0z" fill="#858585" />
          </svg>
          <div className="mt-[7px] mb-[69px] w-[10px] flex-1 rounded-full bg-[#858585]" />
          <svg width="12" height="10" viewBox="0 0 12 10" aria-hidden="true">
            <path d="M6 10l6-10H0z" fill="#858585" />
          </svg>
        </div>
      </div>
    </aside>
  );
}

export default function App() {
  return (
    <div className="flex h-screen flex-col overflow-hidden bg-[#f0f0f0] font-['Open_Sans',sans-serif] text-sm text-black">
      <TopBars />
      <div className="flex min-h-0 flex-1">
        <LeftPanel />
        <MainArea />
        <RightPanel />
      </div>
    </div>
  );
}
